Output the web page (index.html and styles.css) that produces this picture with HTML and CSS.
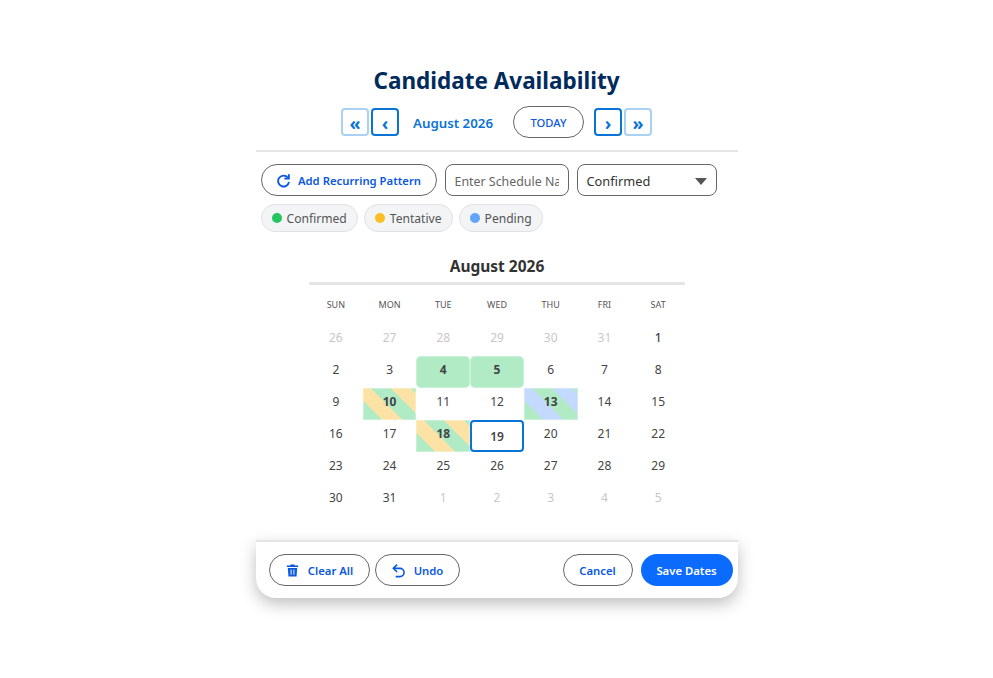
FILE: index.html
```html
<!DOCTYPE html>
<html lang="en">
<head>
<meta charset="utf-8">
<title>Candidate Availability</title>
<link rel="stylesheet" href="styles.css">
</head>
<body>
<main class="panel">
  <h1 class="title">Candidate Availability</h1>
  <div class="nav">
    <button class="nav-btn faded">«</button>
    <button class="nav-btn">‹</button>
    <span class="nav-month">August 2026</span>
    <button class="today">TODAY</button>
    <button class="nav-btn">›</button>
    <button class="nav-btn faded">»</button>
  </div>
  <div class="controls">
    <button class="pill recur">
      <svg class="icon" viewBox="0 0 16 16"><path d="M13.800 9.500A5.800 5.800 0 1 1 12.600 5" fill="none" stroke="currentColor" stroke-width="2"/><path d="M13.700 1.200V6H8.900" fill="none" stroke="currentColor" stroke-width="2"/></svg>
      Add Recurring Pattern
    </button>
    <input class="name-input" placeholder="Enter Schedule Name">
    <div class="select">Confirmed<span class="caret"></span></div>
  </div>
  <div class="legend">
    <span class="chip"><i class="dot green"></i>Confirmed</span>
    <span class="chip"><i class="dot amber"></i>Tentative</span>
    <span class="chip"><i class="dot blue"></i>Pending</span>
  </div>
  <section class="calendar">
    <h2 class="cal-title">August 2026</h2>
    <div class="grid heads">
      <span>SUN</span><span>MON</span><span>TUE</span><span>WED</span><span>THU</span><span>FRI</span><span>SAT</span>
    </div>
    <div class="grid days">
      <span class="out">26</span><span class="out">27</span><span class="out">28</span><span class="out">29</span><span class="out">30</span><span class="out">31</span><span class="m">1</span>
      <span>2</span><span>3</span><span class="conf b">4</span><span class="conf b">5</span><span>6</span><span>7</span><span>8</span>
      <span>9</span><span class="stripe-t b">10</span><span>11</span><span>12</span><span class="stripe-p b">13</span><span>14</span><span>15</span>
      <span>16</span><span>17</span><span class="stripe-t b">18</span><span class="today-cell">19</span><span>20</span><span>21</span><span>22</span>
      <span>23</span><span>24</span><span>25</span><span>26</span><span>27</span><span>28</span><span>29</span>
      <span>30</span><span>31</span><span class="out">1</span><span class="out">2</span><span class="out">3</span><span class="out">4</span><span class="out">5</span>
    </div>
  </section>
  <footer class="actions">
    <button class="pill act clear">
      <svg class="icon" viewBox="0 0 16 16"><path d="M6 1.500h4l.6 1.200H14v1.600H2V2.700h3.400zM3 5.300h10l-.7 9.200H3.700zM6 7v5.500h1V7zm3 0v5.500h1V7z" fill="currentColor" fill-rule="evenodd"/></svg>
      Clear All
    </button>
    <button class="pill act undo">
      <svg class="icon" viewBox="0 0 16 16"><path d="M2.800 5.700H9.500a4.400 4.400 0 0 1 0 8.800H5" fill="none" stroke="currentColor" stroke-width="1.700"/><path d="M6.500 1.800 2.500 5.700 6.500 9.600" fill="none" stroke="currentColor" stroke-width="1.700"/></svg>
      Undo
    </button>
    <span class="spacer"></span>
    <button class="pill act cancel">Cancel</button>
    <button class="pill save">Save Dates</button>
  </footer>
</main>
</body>
</html>
```
FILE: styles.css
```css
* { box-sizing: border-box; }
html, body { margin: 0; padding: 0; background: #fff; }
body {
  font-family: "Noto Sans", sans-serif;
  color: #333;
  display: flex;
  justify-content: center;
  min-height: 678px;
}
button { font-family: inherit; cursor: pointer; }
.panel { width: 482px; margin-top: 64px; }
.title {
  margin: 0;
  text-align: center;
  font-size: 22.500px;
  line-height: 33px;
  font-weight: 700;
  color: #002b5c;
}
.nav {
  display: flex;
  justify-content: center;
  align-items: center;
  height: 32px;
  margin-top: 9px;
  gap: 2px;
}
.nav-btn {
  width: 28px;
  height: 28px;
  padding: 1px 0 0;
  border: 2px solid #0a74d6;
  border-radius: 4px;
  background: #fff;
  color: #0a74d6;
  font-size: 18px;
  font-weight: 700;
  line-height: 18px;
}
.nav-btn.faded { border-color: #a9d1f3; }
.nav-month {
  margin: 1px 18px 0 12px;
  font-size: 13.300px;
  font-weight: 600;
  color: #0a74d6;
}
.today {
  width: 71px;
  height: 32px;
  margin-right: 8px;
  padding: 0;
  border: 1px solid #666;
  border-radius: 16px;
  background: #fff;
  color: #0a58e0;
  font-size: 11.200px;
  font-weight: 500;
}
.controls {
  display: flex;
  align-items: center;
  gap: 8px;
  margin-top: 12px;
  padding: 12px 4px 0 5px;
  border-top: 2px solid #e5e5e5;
}
.pill {
  display: inline-flex;
  align-items: center;
  justify-content: center;
  height: 32px;
  border: 1px solid #666;
  border-radius: 16px;
  background: #fff;
  color: #0a58e0;
  font-size: 11.300px;
  font-weight: 600;
  padding: 0;
}
.icon { width: 15px; height: 15px; flex: none; }
.recur { width: 176px; gap: 7px; }
.name-input {
  width: 124px;
  height: 32px;
  padding: 2px 9px 0;
  border: 1px solid #666;
  border-radius: 8px;
  font-family: inherit;
  font-size: 12.400px;
  color: #333;
  outline: none;
}
.name-input::placeholder { color: #666; opacity: 1; }
.select {
  width: 140px;
  height: 32px;
  padding: 2px 9px 0;
  border: 1px solid #666;
  border-radius: 8px;
  font-size: 12.800px;
  color: #333;
  display: flex;
  align-items: center;
  justify-content: space-between;
}
.caret {
  width: 0;
  height: 0;
  border-left: 6px solid transparent;
  border-right: 6px solid transparent;
  border-top: 7px solid #555;
}
.legend {
  display: flex;
  gap: 6px;
  margin-top: 8px;
  padding: 0 5px;
}
.chip {
  display: inline-flex;
  align-items: center;
  gap: 5px;
  height: 28px;
  padding: 0 10px;
  border: 1px solid #dfe1e6;
  border-radius: 14px;
  background: #f3f4f6;
  color: #555;
  font-size: 12.100px;
}
.dot { width: 10px; height: 10px; border-radius: 50%; }
.dot.green { background: #22c55e; }
.dot.amber { background: #fbbf24; }
.dot.blue { background: #60a5fa; }
.calendar { width: 376px; margin: 20px 0 0 53.500px; }
.cal-title {
  margin: 0;
  height: 33px;
  text-align: center;
  font-size: 15.500px;
  line-height: 28px;
  font-weight: 700;
  color: #333;
  border-bottom: 3px solid #e5e5e5;
}
.grid { display: grid; grid-template-columns: repeat(7, 1fr); }
.heads span {
  height: 39px;
  line-height: 39px;
  text-align: center;
  font-size: 9px;
  color: #555;
}
.days { grid-auto-rows: 32px; }
.days span {
  display: flex;
  align-items: center;
  justify-content: center;
  padding-bottom: 5px;
  font-size: 12px;
  color: #444;
}
.days .out { color: #c8c8c8; }
.days .m { font-weight: 500; }
.days .b { font-weight: 700; }
.days .conf { background: #b1ebc6; border-radius: 5px; box-shadow: inset 0 0 0 1px rgba(255,255,255,.3); }
.days .stripe-t {
  background: repeating-linear-gradient(45deg, #b1ebc6 0 14px, #fde2a5 14px 28px);
  box-shadow: inset 0 0 0 1px rgba(255,255,255,.3);
}
.days .stripe-p {
  background: repeating-linear-gradient(45deg, #b1ebc6 0 14px, #c3dafe 14px 28px);
  box-shadow: inset 0 0 0 1px rgba(255,255,255,.3);
}
.days .today-cell {
  border: 2px solid #0a74d6;
  border-radius: 4px;
  padding-bottom: 0;
  font-weight: 600;
}
.actions {
  position: relative;
  display: flex;
  align-items: center;
  gap: 5px;
  height: 58px;
  margin-top: 24px;
  padding: 0 5px 0 13px;
  background: #fff;
  border-top: 2px solid #e5e5e5;
  border-radius: 0 0 20px 20px;
  box-shadow: 0 6px 16px rgba(0,0,0,.25);
}
.act { gap: 8px; }
.clear { width: 101px; }
.undo { width: 85px; }
.spacer { flex: 1; }
.cancel { width: 70px; margin-right: 3px; }
.save {
  width: 92px;
  border: 0;
  background: #0b6bff;
  color: #fff;
}
```
